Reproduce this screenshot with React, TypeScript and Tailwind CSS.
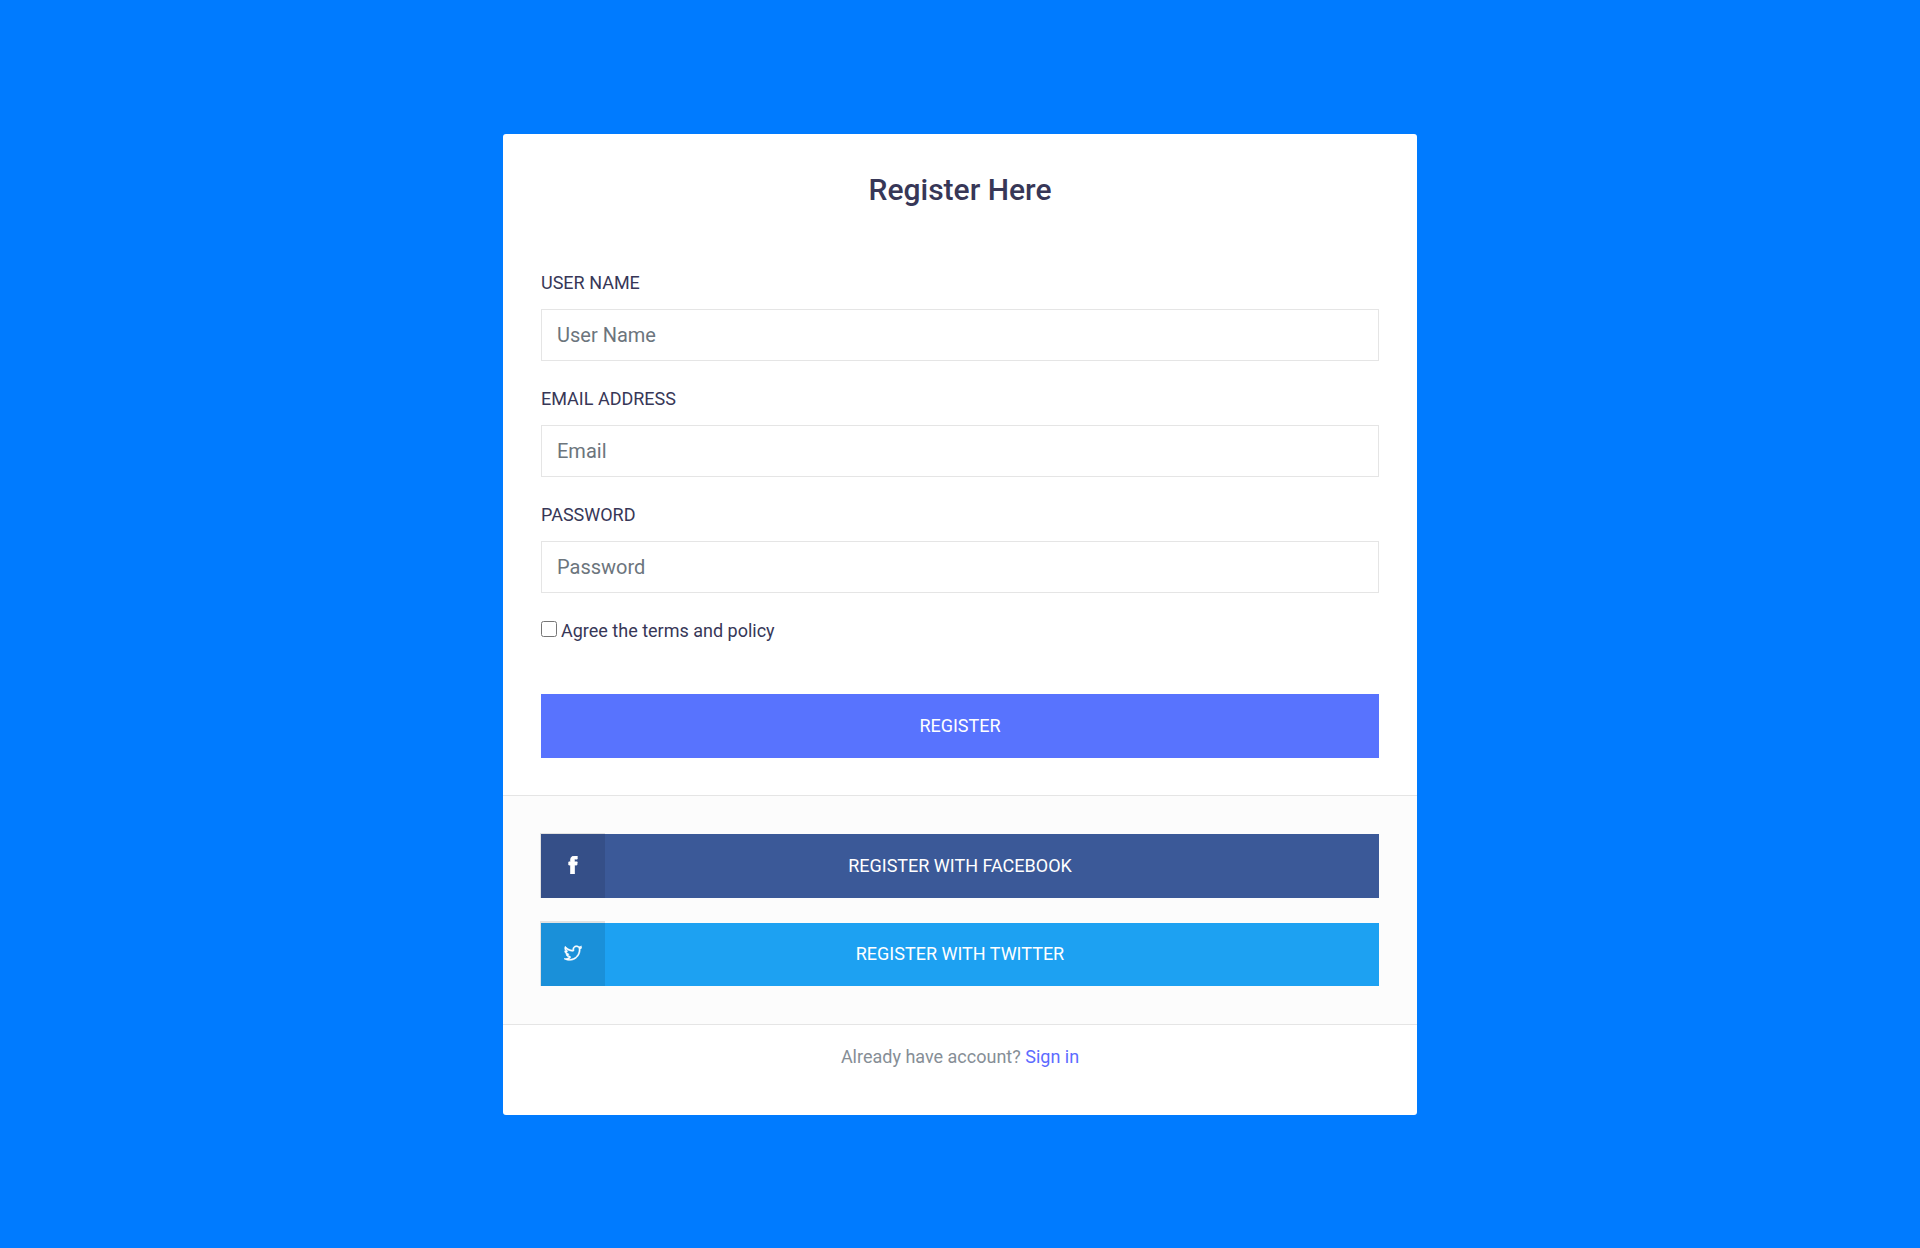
import type { ReactNode } from "react";
import { TfiFacebook, TfiTwitter } from "react-icons/tfi";

function Field({ id, label, type, placeholder }: { id: string; label: string; type: string; placeholder: string }) {
  return (
    <div className="flex flex-col gap-[13px]">
      <label htmlFor={id} className="text-lg leading-[27px] uppercase">
        {label}
      </label>
      <input
        id={id}
        type={type}
        placeholder={placeholder}
        className="h-[52px] w-full border border-[#e5e5e5] bg-white px-[15px] text-xl placeholder:text-[#6c757d]"
      />
    </div>
  );
}

function SocialButton({ className, icon, children }: { className: string; icon: ReactNode; children: string }) {
  return (
    <button type="button" className={`relative w-full text-lg uppercase text-white ${className}`}>
      <span className="absolute bottom-0 -left-px flex size-[65px] items-center justify-center bg-black/10">
        {icon}
      </span>
      {children}
    </button>
  );
}

export default function App() {
  return (
    <main className="flex min-h-screen items-center justify-center bg-[#007bff] font-[Roboto,sans-serif] text-[#373757]">
      <div className="w-full max-w-[914px] overflow-hidden rounded-[3px] bg-white">
        <h1 className="pt-[38px] text-center text-[30px] leading-9 font-medium">Register Here</h1>
        <form className="px-[38px] pt-[61px] pb-[37px]">
          <div className="flex flex-col gap-6">
            <Field id="username" label="User Name" type="text" placeholder="User Name" />
            <Field id="email" label="Email Address" type="email" placeholder="Email" />
            <Field id="password" label="Password" type="password" placeholder="Password" />
          </div>
          <div className="mt-6 flex items-start gap-1 text-lg leading-7">
            <input id="agree" type="checkbox" className="mt-1 size-4" />
            <label htmlFor="agree">Agree the terms and policy</label>
          </div>
          <button type="submit" className="mt-[49px] h-16 w-full bg-[#5873fe] text-lg uppercase text-white">
            Register
          </button>
        </form>
        <div className="flex flex-col gap-[25px] border-y border-[#e5e5e5] bg-[#fcfcfc] px-[38px] py-[38px]">
          <SocialButton
            className="h-16 bg-[#3b5998]"
            icon={<TfiFacebook className="size-[18px] stroke-white [stroke-width:0.8]" />}
          >
            Register with facebook
          </SocialButton>
          <SocialButton
            className="h-[63px] bg-[#1da1f2]"
            icon={<TfiTwitter className="size-[18px] stroke-white [stroke-width:0.6]" />}
          >
            Register with twitter
          </SocialButton>
        </div>
        <p className="pt-[18px] pb-11 text-center text-lg leading-7 text-[#868e96]">
          Already have account?{" "}
          <a href="#signin" className="text-[#5c6bff]">Sign in</a>
        </p>
      </div>
    </main>
  );
}
